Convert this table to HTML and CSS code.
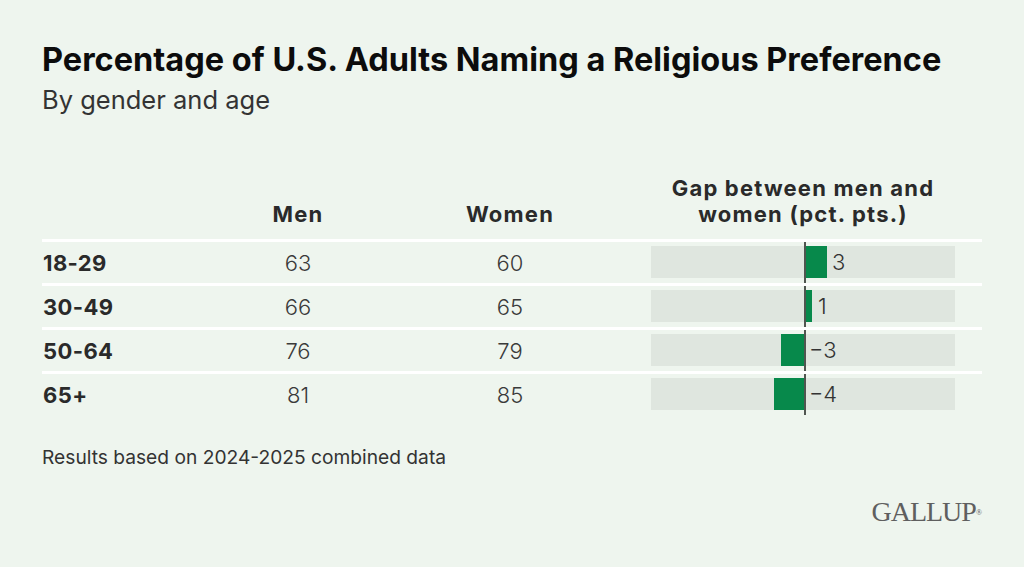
FILE: index.html
```html
<!DOCTYPE html>
<html lang="en">
<head>
<meta charset="utf-8">
<title>Percentage of U.S. Adults Naming a Religious Preference</title>
<link rel="stylesheet" href="styles.css">
</head>
<body>
<main class="page">
  <header class="head">
    <h1 class="title">Percentage of U.S. Adults Naming a Religious Preference</h1>
    <p class="subtitle">By gender and age</p>
  </header>

  <section class="table">
    <div class="row row-head">
      <div class="cell label"></div>
      <div class="cell num col-head">Men</div>
      <div class="cell num col-head">Women</div>
      <div class="cell gap col-head gap-head">Gap between men and<br>women (pct. pts.)</div>
    </div>

    <div class="row">
      <div class="cell label">18-29</div>
      <div class="cell num">63</div>
      <div class="cell num">60</div>
      <div class="cell gap">
        <div class="track">
          <div class="bar pos" style="width:22px"></div>
          <span class="val" style="left:181px">3</span>
        </div>
      </div>
    </div>

    <div class="row">
      <div class="cell label">30-49</div>
      <div class="cell num">66</div>
      <div class="cell num">65</div>
      <div class="cell gap">
        <div class="track">
          <div class="bar pos" style="width:7px"></div>
          <span class="val" style="left:167px">1</span>
        </div>
      </div>
    </div>

    <div class="row">
      <div class="cell label">50-64</div>
      <div class="cell num">76</div>
      <div class="cell num">79</div>
      <div class="cell gap">
        <div class="track">
          <div class="bar neg" style="width:23px"></div>
          <span class="val" style="left:158px">&minus;3</span>
        </div>
      </div>
    </div>

    <div class="row">
      <div class="cell label">65+</div>
      <div class="cell num">81</div>
      <div class="cell num">85</div>
      <div class="cell gap">
        <div class="track">
          <div class="bar neg" style="width:30px"></div>
          <span class="val" style="left:158px">&minus;4</span>
        </div>
      </div>
    </div>
  </section>

  <footer class="foot">
    <p class="note">Results based on 2024-2025 combined data</p>
    <div class="logo">GALLUP<sup class="reg">&reg;</sup></div>
  </footer>
</main>
</body>
</html>
```

FILE: styles.css
```css
html, body {
  margin: 0;
  padding: 0;
}

body {
  background: #eef5ee;
  font-family: Inter, "Noto Sans", "Liberation Sans", sans-serif;
  color: #222;
  width: 1024px;
  height: 567px;
  overflow: hidden;
}

.page {
  padding: 40px 42px 0 42px;
  display: flex;
  flex-direction: column;
}

.title {
  margin: 0;
  font-size: 32.5px;
  line-height: 39px;
  font-weight: 700;
  color: #0c0c0c;
}

.subtitle {
  margin: 6px 0 0 0;
  font-size: 25.5px;
  line-height: 30px;
  font-weight: 400;
  color: #333;
}

.table {
  margin-top: 60px;
  width: 940px;
  display: flex;
  flex-direction: column;
}

.row {
  display: grid;
  grid-template-columns: 158px 196px 228px 358px;
  height: 41px;
  border-top: 3px solid #ffffff;
  align-items: center;
}

.row-head {
  height: auto;
  border-top: none;
  align-items: end;
  padding-bottom: 12px;
}

.cell.label {
  font-size: 22px;
  font-weight: 700;
  letter-spacing: 0.4px;
  color: #2a2a2a;
  padding-left: 1px;
}

.cell.num {
  text-align: center;
  font-size: 22px;
  font-weight: 300;
  color: #3a3a3a;
}

.cell.num.col-head,
.gap-head {
  font-size: 22px;
  font-weight: 700;
  letter-spacing: 1.2px;
  color: #2a2a2a;
  line-height: 26px;
}

.gap-head {
  text-align: center;
}

.cell.gap {
  align-self: stretch;
  display: flex;
  padding: 0 27px;
}

.row-head .cell.gap {
  display: block;
  padding: 0;
}

.track {
  position: relative;
  flex: 1;
  height: 100%;
}

.track::before {
  content: "";
  position: absolute;
  left: 0;
  right: 0;
  top: 4px;
  height: 32px;
  background: #dfe6df;
}

.track::after {
  content: "";
  position: absolute;
  left: 153px;
  top: 0;
  bottom: 0;
  width: 2px;
  background: #505550;
}

.bar {
  position: absolute;
  top: 4px;
  height: 32px;
  background: #07894b;
}

.bar.pos {
  left: 154px;
}

.bar.neg {
  right: 151px;
}

.val {
  position: absolute;
  top: 0;
  line-height: 41px;
  font-size: 22px;
  font-weight: 300;
  color: #333;
}

.foot {
  margin-top: 30px;
  width: 940px;
  display: flex;
  flex-direction: column;
}

.note {
  margin: 0;
  font-size: 19.2px;
  line-height: 24px;
  color: #333;
}

.logo {
  align-self: flex-end;
  margin-top: 28px;
  font-family: "Liberation Serif", "Times New Roman", serif;
  font-size: 28px;
  letter-spacing: -1px;
  color: #5f5f5f;
  line-height: 30px;
}

.reg {
  font-size: 8px;
  vertical-align: top;
  letter-spacing: 0;
  position: relative;
  top: 1px;
}
```
